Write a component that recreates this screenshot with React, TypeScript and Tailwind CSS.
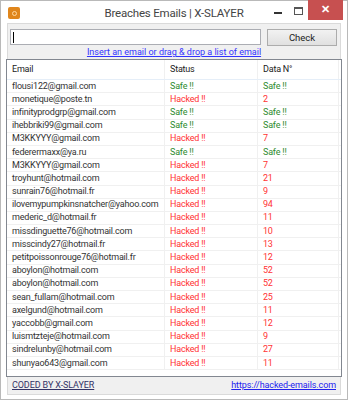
import React from 'react';

type Row = { email: string; hacked: boolean; count?: number };

const rows: Row[] = [
  { email: 'flousi122@gmail.com', hacked: false },
  { email: 'monetique@poste.tn', hacked: true, count: 2 },
  { email: 'infinityprodgrp@gmail.com', hacked: false },
  { email: 'ihebbriki99@gmail.com', hacked: false },
  { email: 'M3KKYYY@gmail.com', hacked: true, count: 7 },
  { email: 'federermaxx@ya.ru', hacked: false },
  { email: 'M3KKYYY@gmail.com', hacked: true, count: 7 },
  { email: 'troyhunt@hotmail.com', hacked: true, count: 21 },
  { email: 'sunrain76@hotmail.fr', hacked: true, count: 9 },
  { email: 'ilovemypumpkinsnatcher@yahoo.com', hacked: true, count: 94 },
  { email: 'mederic_d@hotmail.fr', hacked: true, count: 11 },
  { email: 'missdinguette76@hotmail.com', hacked: true, count: 10 },
  { email: 'misscindy27@hotmail.fr', hacked: true, count: 13 },
  { email: 'petitpoissonrouge76@hotmail.fr', hacked: true, count: 12 },
  { email: 'aboylon@hotmail.com', hacked: true, count: 52 },
  { email: 'aboylon@hotmail.com', hacked: true, count: 52 },
  { email: 'sean_fullam@hotmail.com', hacked: true, count: 25 },
  { email: 'axelgund@hotmail.com', hacked: true, count: 11 },
  { email: 'yaccobb@gmail.com', hacked: true, count: 12 },
  { email: 'luismtzteje@hotmail.com', hacked: true, count: 9 },
  { email: 'sindrelunby@hotmail.com', hacked: true, count: 27 },
  { email: 'shunyao643@gmail.com', hacked: true, count: 11 },
];

const font = { fontFamily: 'Roboto, "Liberation Sans", Arial, sans-serif' };

const Cell: React.FC<{ className?: string; children?: React.ReactNode }> = ({ className = '', children }) => (
  <div className={`px-[5px] border-r border-[#f0f0f0] whitespace-nowrap overflow-hidden leading-[13px] ${className}`}>
    {children}
  </div>
);

export default function App() {
  return (
    <div className="w-[348px] h-[400px] bg-white border border-[#b9b9b9] flex flex-col" style={font}>
      {/* title bar */}
      <div className="h-[22px] shrink-0 flex items-start relative">
        <div className="mt-[6px] ml-[7px] w-[12px] h-[12px] rounded-[2px] bg-[#e0861c] flex items-center justify-center">
          <div className="w-[5px] h-[5px] rounded-full border border-[#ffd9a0]" />
        </div>
        <div className="absolute left-0 right-0 top-[3px] text-center text-[11.5px] tracking-[-0.2px] text-[#444] leading-[18px]">
          Breaches Emails | X-SLAYER
        </div>
        <div className="ml-auto flex items-start relative">
          <div className="mt-[11px] mr-[12px] w-[8px] h-[2px] bg-[#333]" />
          <div className="mt-[6px] mr-[5px] w-[9px] h-[8px] border border-[#555] border-t-2" />
          <div className="w-[35px] h-[20px] bg-[#c75050] flex items-center justify-center text-white text-[11px] font-bold mr-[4px] -mt-px">
            ✕
          </div>
        </div>
      </div>

      {/* client */}
      <div className="mx-[6px] mb-[5px] flex-1 bg-[#f0f0f0] border border-[#dadada] flex flex-col">
        <div className="flex gap-[6px] px-[2px] pt-[5px] shrink-0">
          <div className="w-[251px] h-[16px] bg-white border border-[#abadb3] flex items-center pl-[2px]">
            <div className="w-px h-[11px] bg-black" />
          </div>
          <button className="w-[70px] h-[17px] border border-[#acacac] bg-gradient-to-b from-[#f2f2f2] to-[#e0e0e0] text-[9.5px] text-[#222] leading-none">
            Check
          </button>
        </div>
        <div className="shrink-0 text-center text-[9px] text-[#3333ff] underline leading-[13px]">
          Insert an email or drag &amp; drop a list of email
        </div>

        {/* list */}
        <div className="shrink-0 mx-[-2px] h-[318px] bg-white border border-[#828790] text-[9px] tracking-[-0.2px] flex flex-col overflow-hidden">
          <div className="shrink-0 flex h-[20px] items-center text-[#222] border-b border-[#e5eef8]">
            <Cell className="w-[158px] border-[#e5eef8] h-full flex items-center">Email</Cell>
            <Cell className="w-[93px] border-[#e5eef8] h-full flex items-center">Status</Cell>
            <Cell className="w-[81px] border-[#e5eef8] h-full flex items-center">Data N°</Cell>
          </div>
          {[...rows, null].map((r, i) => (
            <div key={i} className="shrink-0 flex h-[13.2px] border-b border-[#f0f0f0] items-center">
              <Cell className="w-[158px] text-[#333]">{r ? r.email : ''}</Cell>
              <Cell className={`w-[93px] ${r && r.hacked ? 'text-[#ff3333]' : 'text-[#2e8b2e]'}`}>
                {r ? (r.hacked ? 'Hacked !!' : 'Safe !!') : ''}
              </Cell>
              <Cell className={`w-[81px] ${r && r.hacked ? 'text-[#ff3333]' : 'text-[#2e8b2e]'}`}>
                {r ? (r.hacked ? r.count : 'Safe !!') : ''}
              </Cell>
            </div>
          ))}
        </div>

        {/* footer */}
        <div className="flex justify-between items-center px-[4px] h-[17px] text-[9px] tracking-[-0.1px]">
          <span className="text-[#333366] underline">CODED BY X-SLAYER</span>
          <span className="text-[#2222ee] underline">https://hacked-emails.com</span>
        </div>
      </div>
    </div>
  );
}
